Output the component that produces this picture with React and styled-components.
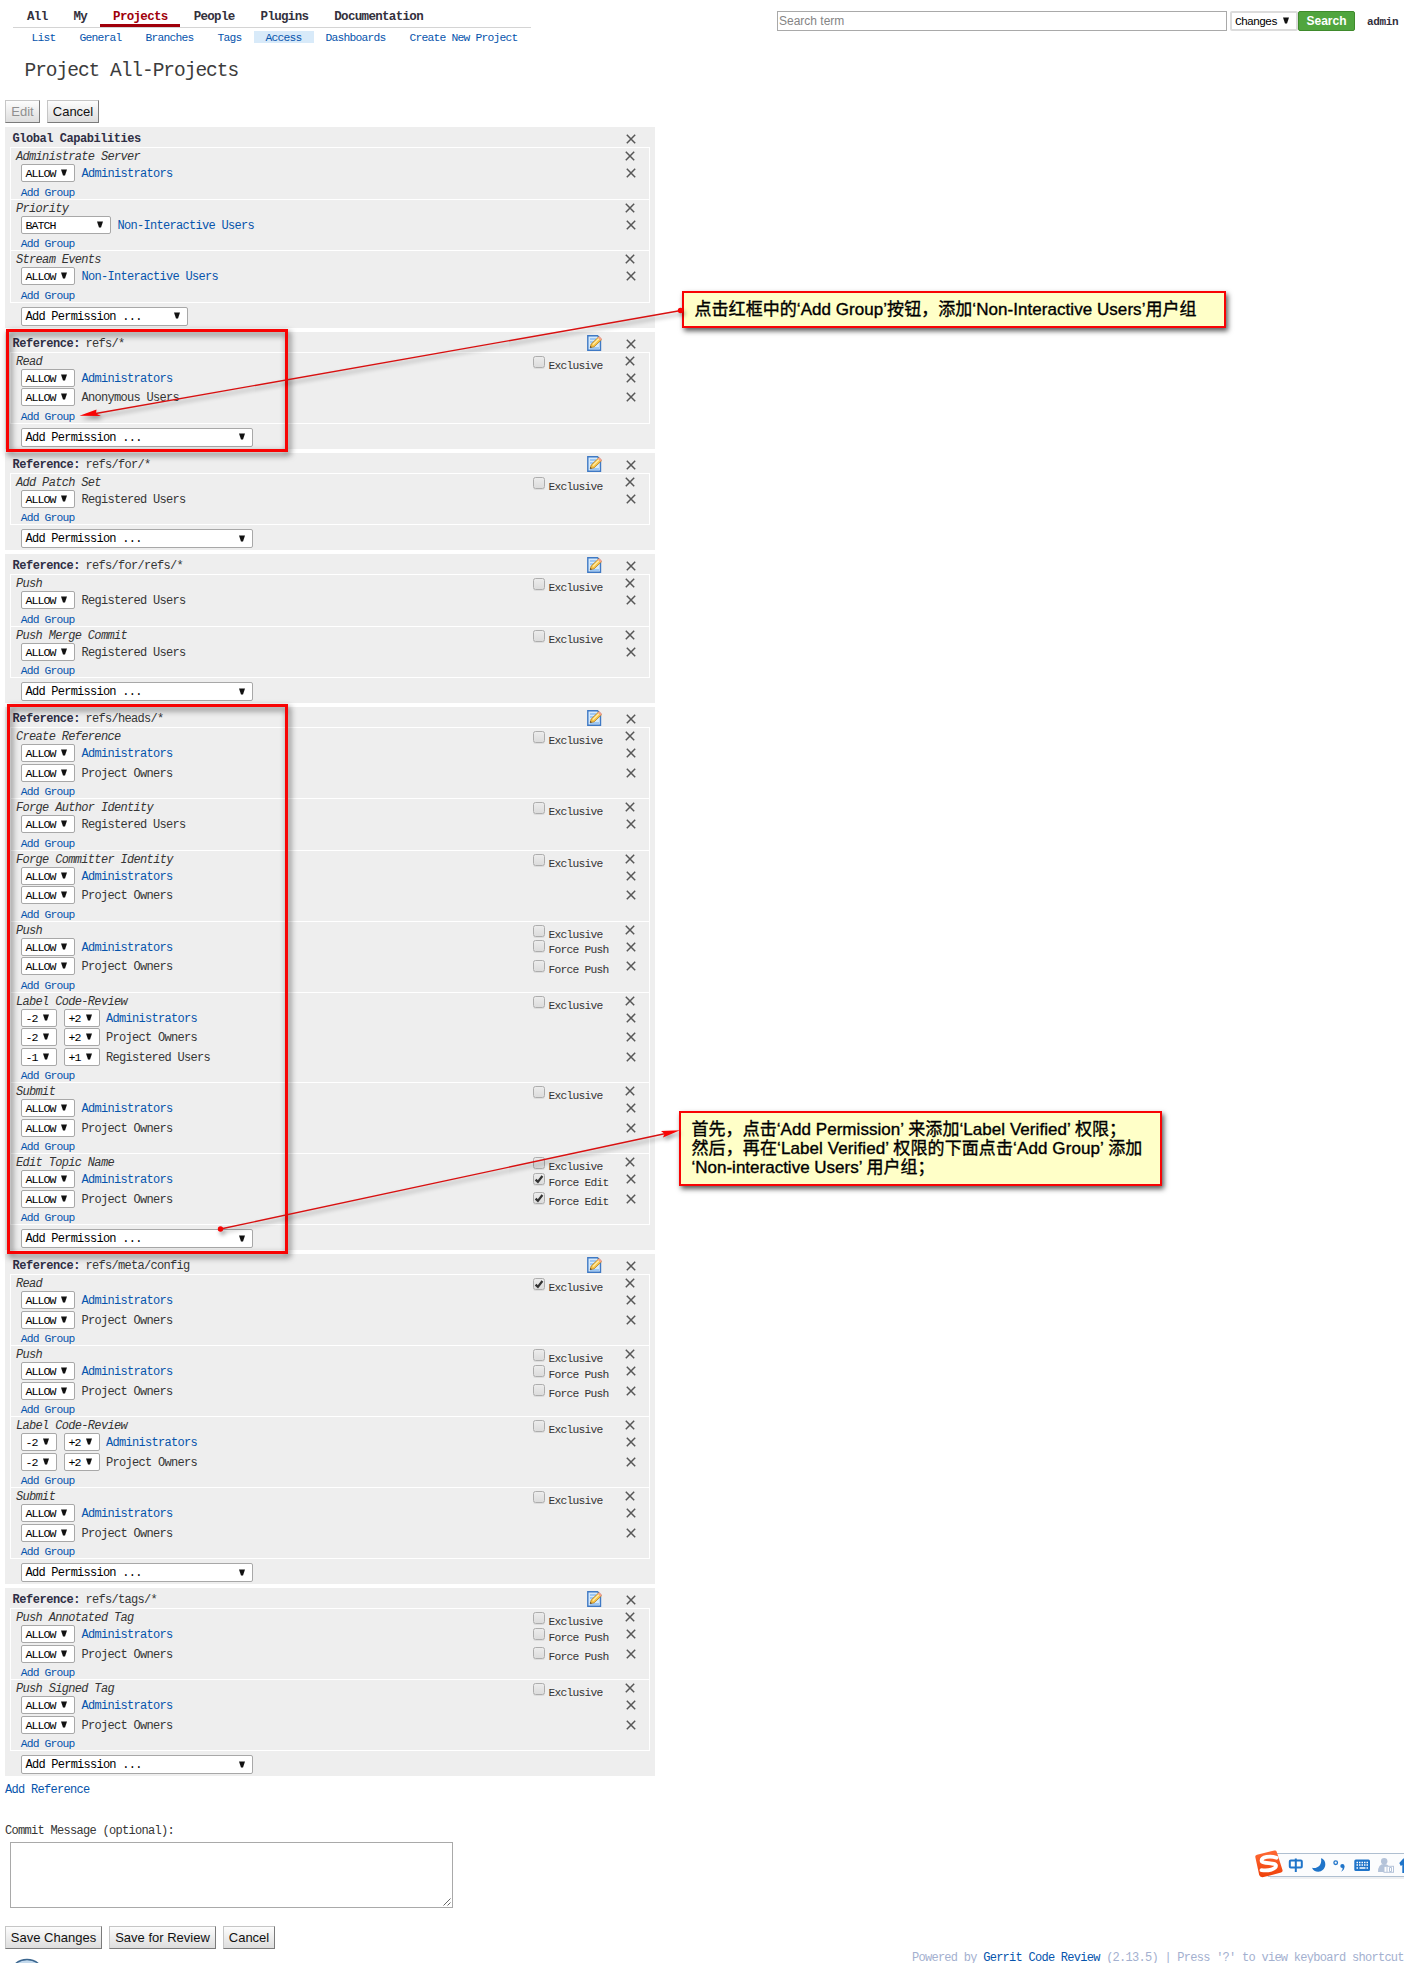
import React from "react";
import styled, { createGlobalStyle, css } from "styled-components";

const BLUE = "#0654ac";
const INK = "#353535";

const mono = (size, advance) => css`
  font-family: "Liberation Mono", "Noto Sans CJK SC", monospace;
  font-size: ${size}px;
  letter-spacing: ${(advance - size * 0.6).toFixed(3)}px;
  white-space: pre;
`;

const Global = createGlobalStyle`
  *, *::before, *::after { box-sizing: border-box; }
  body { margin: 0; background: #fff; color: ${INK}; }
`;

const Page = styled.div`
  position: relative;
  width: 1404px;
  height: 1963px;
  overflow: hidden;
  background: #fff;
`;

/* ---------- header ---------- */
const Header = styled.header`
  display: flex;
  align-items: flex-start;
  height: 43px;
`;
const Menu = styled.nav`
  width: 518px;
  margin-left: 13px;
  padding-top: 5px;
  flex: none;
`;
const Tabs = styled.div`
  display: flex;
  height: 23px;
  padding-left: 0.8px;
  border-bottom: 1px solid #d4d4d4;
`;
const Tab = styled.a`
  ${mono(12.5, 6.82)}
  height: 22px;
  padding: 0 12.8px 0 13.2px;
  line-height: 24px;
  font-weight: bold;
  color: ${(p) => (p.$active ? "#a0000a" : "#33303c")};
  border-bottom: 3px solid ${(p) => (p.$active ? "#a0000a" : "transparent")};
`;
const SubTabs = styled.div`
  display: flex;
  margin: 3px 0 0 6.5px;
`;
const SubTab = styled.a`
  ${mono(11.3, 6)}
  height: 12px;
  padding: 0 12px;
  line-height: 14px;
  color: ${BLUE};
  background: ${(p) => (p.$active ? "#d8eaf9" : "transparent")};
`;
const SearchBar = styled.div`
  display: flex;
  align-items: center;
  margin: 11px 0 0 246px;
  height: 20px;
`;
const SearchInput = styled.div`
  width: 450px;
  height: 20px;
  margin-right: 3px;
  border: 1px solid #a9a9a9;
  padding-left: 1px;
  font: 12px/18px "Liberation Sans", Arial, sans-serif;
  color: #858585;
`;
const SearchButton = styled.div`
  width: 57px;
  height: 20px;
  border: 1px solid #3f8a2c;
  border-radius: 2px;
  background: #50a53e;
  color: #fff;
  text-align: center;
  font: bold 12px/18px "Liberation Sans", Arial, sans-serif;
`;
const User = styled.span`
  ${mono(11, 6.25)}
  margin-left: 12px;
  padding-top: 1px;
  font-weight: bold;
  color: #33303c;
`;

const Title = styled.h1`
  ${mono(19.5, 10.68)}
  margin: 13px 0 0 24.5px;
  height: 44px;
  line-height: 31px;
  font-weight: normal;
  color: #3c3c3c;
`;

/* ---------- shared controls ---------- */
const Buttons = styled.div`
  display: flex;
  gap: 7px;
  padding-left: 5px;
  height: 23px;
`;
const Button = styled.div`
  height: 23px;
  width: ${(p) => p.$w}px;
  border: 1px solid;
  border-color: #c6c6c6 #7b7b7b #7b7b7b #c6c6c6;
  background: linear-gradient(#fdfdfd, #ddd);
  text-align: center;
  white-space: nowrap;
  font: 13px/21px "Liberation Sans", Arial, sans-serif;
  color: ${(p) => (p.$disabled ? "#8f8f8f" : "#111")};
`;
const SelectBox = styled.div`
  ${(p) => (p.$big ? mono(12, 6.45) : mono(11.6, 6))}
  display: flex;
  align-items: center;
  justify-content: space-between;
  flex: none;
  width: ${(p) => p.$w}px;
  height: ${(p) => p.$h || 18}px;
  padding: 0 7px 0 ${(p) => (p.$soft ? 3 : 3.5)}px;
  border: ${(p) => (p.$soft ? "2px solid #dcdcdc" : "1px solid #a8a8a8")};
  border-radius: 2px;
  background: #fff;
  color: #000;
  line-height: 17px;
  span {
    padding-top: ${(p) => (p.$big ? 2 : 1)}px;
  }
  svg {
    margin-top: -1px;
  }
`;
const Arrow = () => (
  <svg width="6" height="7" viewBox="0 0 6 7">
    <path d="M0 .5h6L4 6.5H2z" fill="#111" />
  </svg>
);
const Select = ({ text, ...rest }) => (
  <SelectBox {...rest}>
    <span>{text}</span>
    <Arrow />
  </SelectBox>
);

/* ---------- access sections ---------- */
const Sections = styled.main`
  display: flex;
  flex-direction: column;
  gap: 4px;
  width: 650px;
  margin: 4px 0 0 5px;
`;
const SectionBox = styled.section`
  background: #eee;
  padding-left: 5px;
`;
const columns = css`
  display: grid;
  grid-template-columns: 1fr 89px 18px;
  column-gap: 0;
  padding-right: 9px;
`;
const SectionHead = styled.div`
  ${columns}
  height: 20px;
  padding-right: 15px;
`;
const SectionName = styled.div`
  ${mono(12, 6.5)}
  padding-left: 2.5px;
  line-height: 24px;
  b {
    letter-spacing: -0.45px;
    color: #2f2f45;
  }
  i {
    font-style: normal;
    margin-left: -1px;
  }
`;
const EditCell = styled.div`
  padding: 3px 0 0 54px;
  line-height: 0;
`;
const PermissionList = styled.div`
  width: 640px;
  border: 1px solid #fff;
  border-top: 0;
`;
const Permission = styled.div`
  border-top: 1px solid #fff;
  height: ${(p) => 32 + 19.5 * p.$rules}px;
`;
const PermissionHead = styled.div`
  ${columns}
  height: 16px;
`;
const PermissionName = styled.div`
  ${mono(12, 6.53)}
  padding-left: 5px;
  line-height: 18px;
  font-style: italic;
`;
const RuleRow = styled.div`
  ${columns}
  height: 19.5px;
`;
const RuleMain = styled.div`
  display: flex;
  gap: 7px;
  padding-left: 10px;
`;
const Group = styled.span`
  ${mono(12, 6.5)}
  line-height: 20.4px;
  color: ${(p) => (p.$link ? BLUE : INK)};
  margin-left: ${(p) => (p.$tight ? "-1px" : "-0.6px")};
`;
const AddGroup = styled.a`
  ${mono(11.3, 5.95)}
  display: block;
  padding: 3px 0 0 9.8px;
  line-height: 12px;
  color: ${BLUE};
`;
const CheckLabel = styled.div`
  ${mono(11.3, 6)}
  display: flex;
  gap: 3.5px;
  height: 16px;
  padding-top: ${(p) => (p.$rule ? 2.8 : 3)}px;
  span {
    line-height: 20px;
  }
`;
const CheckBox = styled.div`
  flex: none;
  width: 12px;
  height: 12px;
  border: 1px solid #adadad;
  border-radius: 2.5px;
  background: linear-gradient(#ececec, #dcdcdc);
  box-shadow: 0 1px 0 rgba(0, 0, 0, 0.07);
  line-height: 0;
`;
const DeleteCell = styled.div`
  padding: ${(p) => p.$top}px 0 0 ${(p) => p.$left || 4}px;
  line-height: 0;
`;
const SectionFoot = styled.div`
  height: 25px;
  padding: 4px 0 0 11px;
`;

const Delete = ({ top, left }) => (
  <DeleteCell $top={top} $left={left}>
    <svg width="10" height="10" viewBox="0 0 10 10">
      <path d="M.8.8l8.4 8.4M9.2.8L.8 9.2" stroke="#575757" strokeWidth="1.5" />
    </svg>
  </DeleteCell>
);

const Check = ({ label, on, rule }) => (
  <CheckLabel $rule={rule}>
    <CheckBox>
      {on && (
        <svg width="10" height="10" viewBox="0 0 10 10">
          <path d="M1.6 5.6l2.3 2.3L8.4 2" fill="none" stroke="#333" strokeWidth="2.2" />
        </svg>
      )}
    </CheckBox>
    <span>{label}</span>
  </CheckLabel>
);

const EditIcon = () => (
  <svg width="16" height="16" viewBox="0 0 16 16">
    <path d="M.8.8h9.700l3 3v11.400H.8z" fill="#d3e9fc" stroke="#3f79c4" strokeWidth="1.400" />
    <path d="M3 4h6M3 7h4M3 13h9" stroke="#8cbcf0" strokeWidth="1.400" />
    <path d="M3.200 12.600l1-3.600L11.600 1.900l2.900 2.800-7.400 7.100z" fill="#f8c64a" stroke="#b57b1c" strokeWidth=".8" />
    <path d="M5.800 9.600l6.600-6.300" stroke="#fff0ae" strokeWidth="1.300" />
    <path d="M10.800 2.800l1.600-1.500 2.600 2.600-1.500 1.500z" fill="#f4a08a" />
    <path d="M3 12.800l.6-1.900 1.300 1.300z" fill="#333" />
  </svg>
);

const A = "Administrators";
const PO = "Project Owners";
const RU = "Registered Users";
const NI = "Non-Interactive Users";

const SECTIONS = [
  {
    name: "Global Capabilities",
    perms: [
      { name: "Administrate Server", rules: [{ group: A }] },
      { name: "Priority", rules: [{ group: NI, sel: ["BATCH"] }] },
      { name: "Stream Events", rules: [{ group: NI }] },
    ],
  },
  { ref: "refs/*", perms: [{ name: "Read", rules: [{ group: A }, { group: "Anonymous Users" }] }] },
  { ref: "refs/for/*", perms: [{ name: "Add Patch Set", rules: [{ group: RU }] }] },
  {
    ref: "refs/for/refs/*",
    perms: [
      { name: "Push", rules: [{ group: RU }] },
      { name: "Push Merge Commit", rules: [{ group: RU }] },
    ],
  },
  {
    ref: "refs/heads/*",
    perms: [
      { name: "Create Reference", rules: [{ group: A }, { group: PO }] },
      { name: "Forge Author Identity", rules: [{ group: RU }] },
      { name: "Forge Committer Identity", rules: [{ group: A }, { group: PO }] },
      { name: "Push", force: "Force Push", rules: [{ group: A }, { group: PO }] },
      {
        name: "Label Code-Review",
        rules: [
          { group: A, sel: ["-2", "+2"] },
          { group: PO, sel: ["-2", "+2"] },
          { group: RU, sel: ["-1", "+1"] },
        ],
      },
      { name: "Submit", rules: [{ group: A }, { group: PO }] },
      { name: "Edit Topic Name", force: "Force Edit", forced: true, rules: [{ group: A }, { group: PO }] },
    ],
  },
  {
    ref: "refs/meta/config",
    perms: [
      { name: "Read", exclusive: true, rules: [{ group: A }, { group: PO }] },
      { name: "Push", force: "Force Push", rules: [{ group: A }, { group: PO }] },
      {
        name: "Label Code-Review",
        rules: [
          { group: A, sel: ["-2", "+2"] },
          { group: PO, sel: ["-2", "+2"] },
        ],
      },
      { name: "Submit", rules: [{ group: A }, { group: PO }] },
    ],
  },
  {
    ref: "refs/tags/*",
    perms: [
      { name: "Push Annotated Tag", force: "Force Push", rules: [{ group: A }, { group: PO }] },
      { name: "Push Signed Tag", rules: [{ group: A }, { group: PO }] },
    ],
  },
];

const widthOf = (s) => (s === "BATCH" ? 90 : s === "ALLOW" ? 54 : 36);

const Rule = ({ rule, perm }) => {
  const sel = rule.sel || ["ALLOW"];
  return (
    <RuleRow>
      <RuleMain>
        {sel.map((s) => (
          <Select key={s} text={s} $w={widthOf(s)} />
        ))}
        <Group $link={rule.group === A || rule.group === NI} $tight={sel.length > 1}>
          {rule.group}
        </Group>
      </RuleMain>
      <div>{perm.force && <Check rule label={perm.force} on={perm.forced} />}</div>
      <Delete top={4} />
    </RuleRow>
  );
};

const Section = ({ data }) => (
  <SectionBox>
    <SectionHead>
      <SectionName>
        <b>{data.ref ? "Reference:" : data.name}</b>
        {data.ref && <i>{" " + data.ref}</i>}
      </SectionName>
      <EditCell>{data.ref && <EditIcon />}</EditCell>
      <Delete top={7} left={4} />
    </SectionHead>
    <PermissionList>
      {data.perms.map((perm) => (
        <Permission key={perm.name} $rules={perm.rules.length}>
          <PermissionHead>
            <PermissionName>{perm.name}</PermissionName>
            <div>{data.ref && <Check label="Exclusive" on={perm.exclusive} />}</div>
            <Delete top={3} left={data.ref ? 3 : 3.3} />
          </PermissionHead>
          {perm.rules.map((rule, i) => (
            <Rule key={i} rule={rule} perm={perm} />
          ))}
          <AddGroup>Add Group</AddGroup>
        </Permission>
      ))}
    </PermissionList>
    <SectionFoot>
      <Select text="Add Permission ..." $big $h={19} $w={data.ref ? 232 : 167} />
    </SectionFoot>
  </SectionBox>
);

/* ---------- page bottom ---------- */
const AddReference = styled.a`
  ${mono(12, 6.5)}
  display: block;
  margin: 5px 0 0 5px;
  line-height: 18px;
  color: ${BLUE};
`;
const CommitLabel = styled.div`
  ${mono(12, 6.5)}
  margin: 23px 0 0 5px;
  line-height: 18px;
`;
const CommitBox = styled.div`
  display: flex;
  align-items: flex-end;
  justify-content: flex-end;
  width: 443px;
  height: 66px;
  margin: 2px 0 18px 10px;
  border: 1px solid #a9a9a9;
`;
const Footer = styled.footer`
  ${mono(12, 6.47)}
  margin: 1px 0 0 912px;
  line-height: 16px;
  color: #a3b0cf;
  a {
    color: ${BLUE};
  }
`;

/* ---------- annotations ---------- */
const Frame = styled.div`
  position: absolute;
  left: ${(p) => p.$x}px;
  top: ${(p) => p.$y}px;
  width: ${(p) => p.$w}px;
  height: ${(p) => p.$h}px;
  border: 3px solid #f80404;
  filter: drop-shadow(2px 3px 3px rgba(0, 0, 0, 0.65));
`;
const Note = styled.div`
  position: absolute;
  left: ${(p) => p.$x}px;
  top: ${(p) => p.$y}px;
  width: ${(p) => p.$w}px;
  height: ${(p) => p.$h}px;
  padding: 7px 0 0 10.5px;
  border: 2px solid #f80404;
  background: #ffffc8;
  box-shadow: 2px 3px 5px rgba(0, 0, 0, 0.65);
  color: #000;
  font-family: "Liberation Sans", "Noto Sans CJK SC", sans-serif;
  font-size: 17px;
  line-height: 19px;
  white-space: pre;
  -webkit-text-stroke: 0.35px #000;
`;
const NoteLine = styled.div`
  height: 19px;
  letter-spacing: ${(p) => p.$ls || 0}px;
`;
const Lines = styled.svg`
  position: absolute;
  left: 0;
  top: 0;
  filter: drop-shadow(2px 3px 2px rgba(0, 0, 0, 0.4));
`;
const Badge = styled.svg`
  position: absolute;
  left: 12px;
  top: 1957px;
`;
const ImeBar = styled.div`
  position: absolute;
  left: 1254px;
  top: 1848px;
  width: 150px;
  height: 32px;
  overflow: hidden;
  line-height: 0;
`;

const ImeIcons = () => (
  <svg width="160" height="32" viewBox="0 0 160 32">
    <defs>
      <linearGradient id="ime" x1="0" y1="0" x2="0" y2="1">
        <stop offset="0" stopColor="#ff6a35" />
        <stop offset="1" stopColor="#ee4009" />
      </linearGradient>
    </defs>
    <path d="M16 30h144" stroke="#eef0f2" strokeWidth="2" />
    <path d="M14 5.500h146v23H14z" fill="#fbfcfd" stroke="#afbfd0" />
    <path d="M3 6.800L20.400 2.500q1.800-.4 2.300 1.300l5.800 18.300q.5 1.900-1.400 2.400L9.600 29.100q-3.600.7-4.400-2L1.300 9Q1 7.400 3 6.800z" fill="url(#ime)" />
    <path d="M22.500 9.700C16 7.600 7.500 8.900 7.600 12.600c.2 3.600 14.400 1.500 14.400 5.200 0 3.300-7.500 5.300-14.500 4.300" fill="none" stroke="#fff" strokeWidth="3.800" strokeLinecap="round" />
    <g transform="translate(0 2)">
      <g fill="none" stroke="#1f74c9" strokeWidth="2">
        <rect x="35.800" y="10.500" width="12" height="7" rx="1" />
        <path d="M41.800 8.500v13.500" />
      </g>
      <path d="M68.500 8.500c2 .3 4.500 2.500 4.300 6.500-.3 4-3.500 7-7 7-3 0-5.300-1.600-6.300-4 5 1.500 10.500-2.500 9-9.500z" fill="#1f74c9" transform="translate(-1.500 -.3)" />
      <circle cx="81.700" cy="12.700" r="1.800" fill="none" stroke="#1f74c9" strokeWidth="1.300" />
      <circle cx="88.400" cy="16" r="2.100" fill="#1f74c9" />
      <path d="M90.500 16q.3 4-3.600 5.700 2-2 1.800-4.500z" fill="#1f74c9" />
      <rect x="100.300" y="9.500" width="15.700" height="11.500" rx="1.500" fill="#1f74c9" />
      <path d="M102.500 12.500h11.500M102.500 15h11.500" stroke="#fff" strokeWidth="1.500" strokeDasharray="1.500 1" />
      <path d="M102.500 18h1.500M105.500 18h6M112.500 18h1.500" stroke="#fff" strokeWidth="1.400" />
      <g fill="#b4c3d9">
        <circle cx="130.200" cy="11.300" r="3.200" />
        <path d="M124 22q0-8 6-8 4 0 5 3v5z" />
      </g>
      <rect x="130" y="16.300" width="9.500" height="6" fill="#fff" stroke="#b4c3d9" />
      <path d="M133 17v5M135.500 17.500h2v4h-2z" stroke="#b4c3d9" fill="none" />
      <path d="M145.300 13l4-4.500h5v14.500h-6v-8l-1.500 1z" fill="#1f74c9" />
    </g>
  </svg>
);

export default function App() {
  return (
    <Page>
      <Global />
      <Header>
        <Menu>
          <Tabs>
            {["All", "My", "Projects", "People", "Plugins", "Documentation"].map((t) => (
              <Tab key={t} $active={t === "Projects"}>{t}</Tab>
            ))}
          </Tabs>
          <SubTabs>
            {["List", "General", "Branches", "Tags", "Access", "Dashboards", "Create New Project"].map((t) => (
              <SubTab key={t} $active={t === "Access"}>{t}</SubTab>
            ))}
          </SubTabs>
        </Menu>
        <SearchBar>
          <SearchInput>Search term</SearchInput>
          <Select text="Changes" $w={68} $h={20} $soft />
          <SearchButton>Search</SearchButton>
          <User>admin</User>
        </SearchBar>
      </Header>
      <Title>Project All-Projects</Title>
      <Buttons>
        <Button $w={35} $disabled>Edit</Button>
        <Button $w={52}>Cancel</Button>
      </Buttons>
      <Sections>
        {SECTIONS.map((s) => (
          <Section key={s.ref || s.name} data={s} />
        ))}
      </Sections>
      <AddReference>Add Reference</AddReference>
      <CommitLabel>Commit Message (optional):</CommitLabel>
      <CommitBox>
        <svg width="9" height="9" viewBox="0 0 9 9">
          <path d="M.5 7.500l7-7M4.500 7.500l3-3" stroke="#666" />
        </svg>
      </CommitBox>
      <Buttons>
        <Button $w={97}>Save Changes</Button>
        <Button $w={107}>Save for Review</Button>
        <Button $w={52}>Cancel</Button>
      </Buttons>
      <Footer>
        Powered by <a>Gerrit Code Review</a> (2.13.5) | Press '?' to view keyboard shortcuts
      </Footer>

      <Frame $x={6} $y={329} $w={282} $h={123} />
      <Frame $x={7} $y={704} $w={281} $h={550} />
      <Note $x={682} $y={291} $w={544} $h={37}>
        <NoteLine $ls={0.05}>点击红框中的‘Add Group’按钮，添加‘Non-Interactive Users’用户组</NoteLine>
      </Note>
      <Note $x={679} $y={1111} $w={483} $h={75}>
        <NoteLine $ls={0.05}>首先，点击‘Add Permission’ 来添加‘Label Verified’ 权限；</NoteLine>
        <NoteLine $ls={0.1}>然后，再在‘Label Verified’ 权限的下面点击‘Add Group’ 添加</NoteLine>
        <NoteLine>‘Non-interactive Users’ 用户组；</NoteLine>
      </Note>
      <Lines width="1404" height="1300" viewBox="0 0 1404 1300">
        <g stroke="#d81010" strokeWidth="1.300" fill="#f80404">
          <path d="M681 310.500L90 414.500M220.500 1229L668 1133" />
          <g stroke="none">
            <circle cx="680.500" cy="310.500" r="2.700" />
            <circle cx="220.500" cy="1229" r="2.700" />
            <path d="M79.500 415.800l17-6.300-.5 3.900 5 2.700z" />
            <path d="M680 1130.300l-19 .8 3.500 2.600-1.500 3.800z" />
          </g>
        </g>
      </Lines>
      <Badge width="30" height="6" viewBox="0 0 30 6">
        <circle cx="15" cy="20.500" r="18" fill="#c3d9ec" stroke="#3b668f" strokeWidth="1.300" />
      </Badge>
      <ImeBar>
        <ImeIcons />
      </ImeBar>
    </Page>
  );
}
